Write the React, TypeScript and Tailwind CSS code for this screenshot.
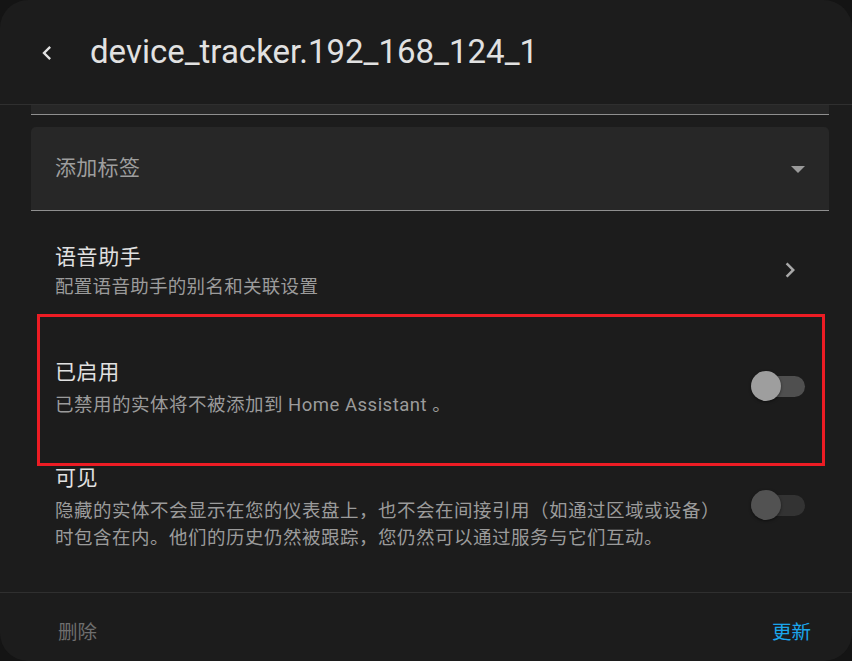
import React from "react";

// entity settings dialog (dark theme)

function Toggle({ on, dim }: { on?: boolean; dim?: boolean }) {
  return (
    <div className="relative w-[54px] h-[30px]">
      <div
        className={`absolute left-[6px] top-[4.5px] w-[48px] h-[21px] rounded-full ${
          dim ? "bg-[#333333]" : "bg-[#4f4f4f]"
        }`}
      />
      <div
        className={`absolute left-0 top-0 w-[30px] h-[30px] rounded-full shadow-[0_1px_3px_rgba(0,0,0,0.5)] ${
          dim ? "bg-[#525252]" : on ? "bg-[#03a9f4]" : "bg-[#9e9e9e]"
        }`}
      />
    </div>
  );
}

export default function App() {
  return (
    <div className="w-[852px] h-[661px] bg-[#141414] overflow-hidden font-['Roboto','Noto_Sans_CJK_SC',sans-serif]">
      <div className="h-full rounded-[28px] bg-[#1c1c1c] flex flex-col overflow-hidden">
        {/* Header */}
        <div className="h-[105px] shrink-0 border-b border-[#2f2f2f] flex items-center">
          <svg viewBox="0 0 24 24" className="w-[28px] h-[28px] ml-[33px] mt-[1px] fill-[#e1e1e1]">
            <path d="M15.41,16.58L10.83,12L15.41,7.41L14,6L8,12L14,18L15.41,16.58Z" />
          </svg>
          <h1 className="ml-[29px] text-[33px] leading-[40px] text-[#e1e1e1] font-normal">
            device_tracker.192_168_124_1
          </h1>
        </div>

        {/* Content */}
        <div className="h-[487px] shrink-0 overflow-hidden flex flex-col">
          <div className="h-[10px] ml-[31px] mr-[23px] bg-[#272727] border-b border-[#8f8f8f]" />

          <div className="mt-[12px] ml-[31px] mr-[23px] h-[84px] rounded-t-[5px] bg-[#272727] border-b border-[#8f8f8f] flex items-center justify-between pl-[24px] pr-[24px]">
            <span className="text-[21px] tracking-[0.3px] text-[#9e9e9e]">添加标签</span>
            <svg viewBox="0 0 14 7" className="w-[14px] h-[7px] mt-[2px] fill-[#9a9a9a]">
              <polygon points="0,0 14,0 7,7" />
            </svg>
          </div>

          {/* Voice assistant */}
          <div className="h-[104px] flex justify-between pl-[55px]">
            <div className="pt-[31px]">
              <div className="text-[21px] leading-[30px] tracking-[0.6px] text-[#e1e1e1]">语音助手</div>
              <div className="text-[18.5px] leading-[30px] tracking-[0.3px] text-[#9b9b9b]">配置语音助手的别名和关联设置</div>
            </div>
            <svg viewBox="0 0 24 24" className="w-[30px] h-[30px] mt-[44px] mr-[47px] fill-[#a8a8a8]">
              <path d="M8.59,16.58L13.17,12L8.59,7.41L10,6L16,12L10,18L8.59,16.58Z" />
            </svg>
          </div>

          {/* Enabled */}
          <div className="relative h-[148px] flex justify-between pl-[55px]">
            <div className="pt-[42px]">
              <div className="text-[21px] leading-[30px] tracking-[0.6px] text-[#e1e1e1]">已启用</div>
              <div className="mt-[3px] text-[18.5px] leading-[30px] tracking-[0.5px] text-[#9b9b9b]">
                已禁用的实体将不被添加到 Home Assistant 。
              </div>
            </div>
            <div className="mt-[56px] mr-[47px]">
              <Toggle />
            </div>
            <div className="absolute top-[-1px] left-[37px] w-[788px] h-[152px] border-[3px] border-[#ec1c24]" />
          </div>

          {/* Visible */}
          <div className="flex justify-between pl-[55px]">
            <div>
              <div className="text-[21px] leading-[30px] tracking-[0.6px] text-[#e1e1e1]">可见</div>
              <div className="mt-[4.5px] text-[18.5px] leading-[27px] tracking-[0.5px] text-[#9b9b9b]">
                <div>隐藏的实体不会显示在您的仪表盘上，也不会在间接引用（如通过区域或设备）</div>
                <div>时包含在内。他们的历史仍然被跟踪，您仍然可以通过服务与它们互动。</div>
              </div>
            </div>
            <div className="mt-[27px] mr-[47px]">
              <Toggle dim />
            </div>
          </div>
        </div>

        {/* Footer */}
        <div className="flex-1 border-t border-[#2f2f2f] flex justify-between items-start pt-[26px] pl-[58px] pr-[41px]">
          <span className="text-[19.5px] leading-[28px] text-[#6e6e6e]">删除</span>
          <span className="text-[19.5px] leading-[28px] text-[#1aa6ec]">更新</span>
        </div>
      </div>
    </div>
  );
}
